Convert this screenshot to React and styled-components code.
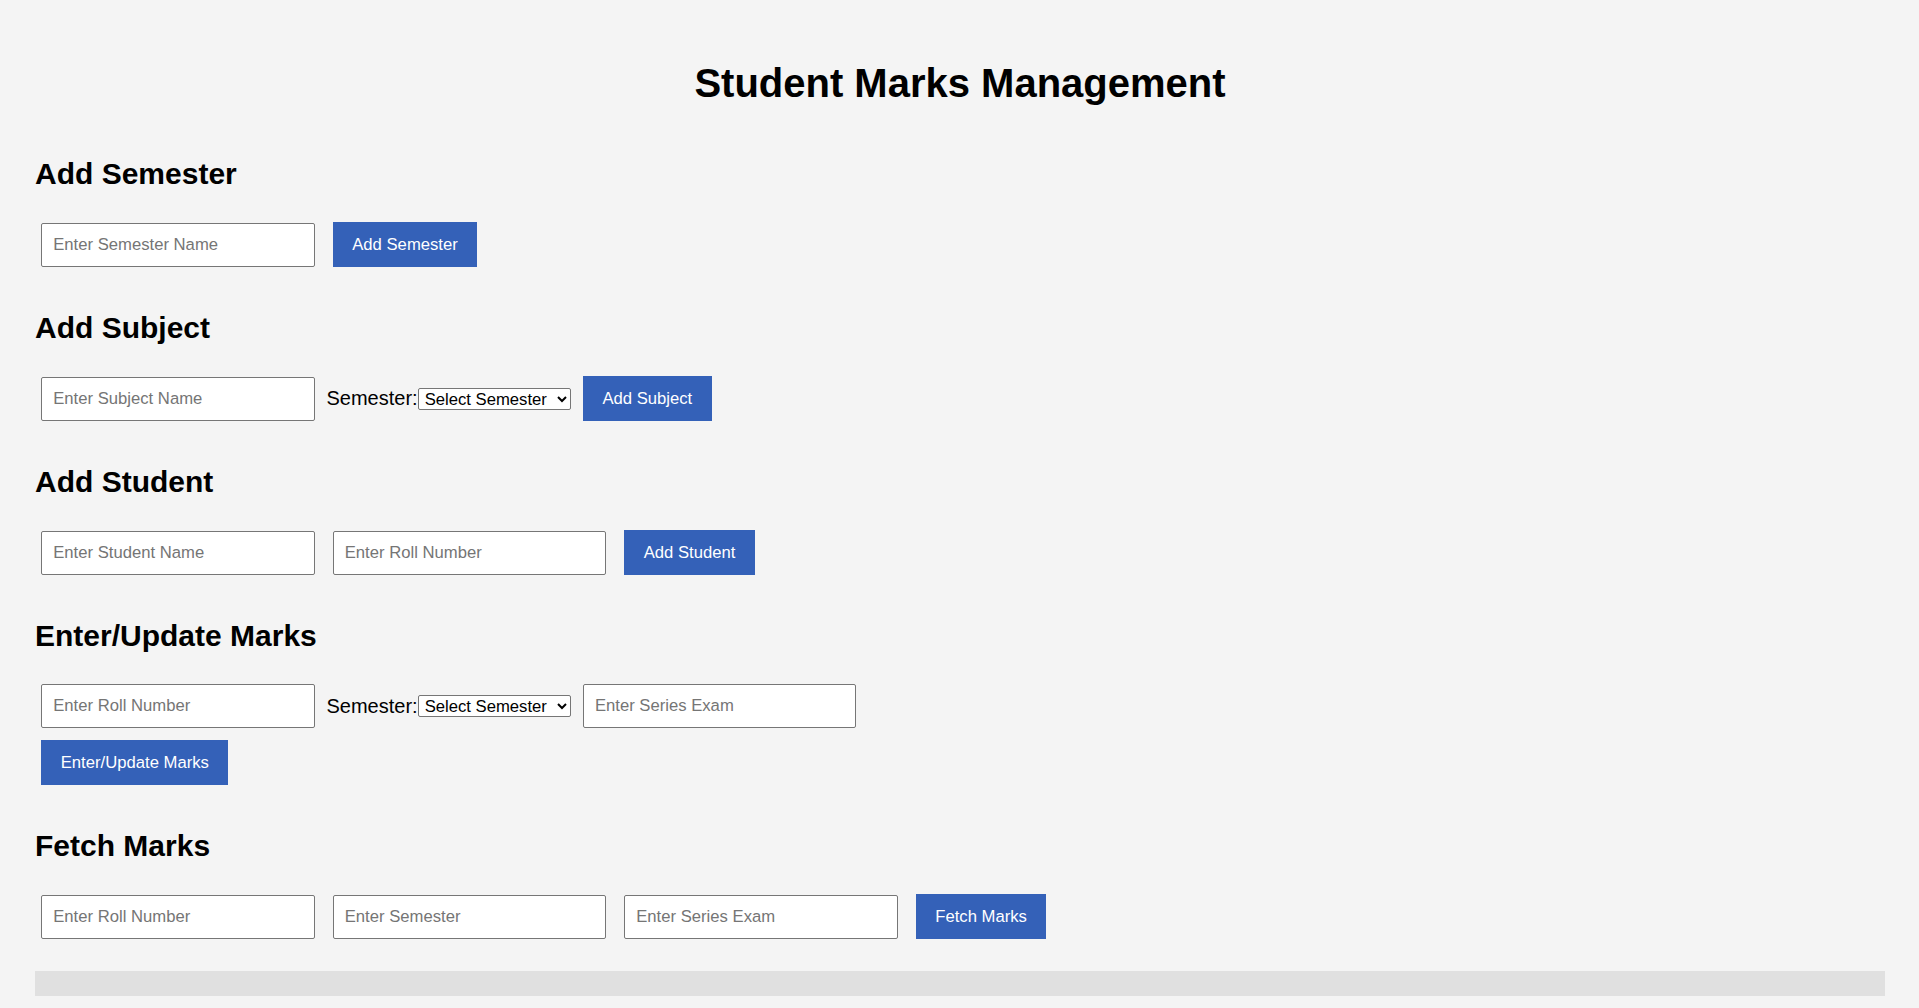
import React, { useState } from 'react';
import styled, { createGlobalStyle } from 'styled-components';

const GlobalStyle = createGlobalStyle`
  html, body {
    margin: 0;
    background-color: #f4f4f4;
  }
  body {
    font-family: "Liberation Sans", Arial, sans-serif;
    color: #000;
  }
`;

const Page = styled.div`
  display: flex;
  flex-direction: column;
  padding: 35px 34px 10px 35px;
`;

const Title = styled.h1`
  margin: 25px 0 26px;
  font-size: 40px;
  line-height: 46px;
  font-weight: 700;
  text-align: center;
`;

const Section = styled.section`
  display: flex;
  flex-direction: column;
  margin-bottom: 12.5px;
`;

const SectionTitle = styled.h2`
  margin: 24.5px 0 25px;
  font-size: 30px;
  line-height: 34.5px;
  font-weight: 700;
`;

const Row = styled.div`
  display: flex;
  flex-wrap: wrap;
  align-items: center;
  column-gap: 5.5px;
`;

const Input = styled.input`
  box-sizing: border-box;
  width: 273.5px;
  height: 43.5px;
  margin: 6.25px;
  padding: 0 11px;
  border: 1px solid #767676;
  border-radius: 2px;
  background: #fff;
  font-family: "Liberation Sans", Arial, sans-serif;
  font-size: 16.67px;
  color: #000;
  outline: none;

  &::placeholder {
    color: #757575;
  }
`;

const Field = styled.div`
  display: inline-flex;
  align-items: center;
`;

const Label = styled.label`
  font-size: 20px;
  line-height: 23px;
`;

const Select = styled.select`
  box-sizing: border-box;
  width: 153.5px;
  height: 22.5px;
  padding: 0 0 0 2px;
  border: 1px solid #767676;
  border-radius: 2px;
  background: #fff;
  color: #000;
  font-family: "Liberation Sans", Arial, sans-serif;
  font-size: 16.67px;
`;

const Button = styled.button`
  margin: 6.25px;
  padding: 0 19.5px;
  height: 45px;
  border: none;
  border-radius: 0;
  background-color: #3461b8;
  color: #fff;
  font-family: "Liberation Sans", Arial, sans-serif;
  font-size: 16.67px;
  cursor: pointer;

  &:hover {
    background-color: #2b55a6;
  }
`;

const Results = styled.div`
  margin-top: 12.5px;
  padding: 12.5px;
  background-color: #e0e0e0;
`;

const SemesterSelect = ({ value, onChange }) => (
  <Field>
    <Label>Semester:</Label>
    <Select value={value} onChange={(e) => onChange(e.target.value)}>
      <option value="">Select Semester</option>
    </Select>
  </Field>
);

const App = () => {
  const [subjectSem, setSubjectSem] = useState('');
  const [marksSem, setMarksSem] = useState('');

  return (
    <>
      <GlobalStyle />
      <Page>
        <Title>Student Marks Management</Title>

        <Section>
          <SectionTitle>Add Semester</SectionTitle>
          <Row>
            <Input type="text" placeholder="Enter Semester Name" />
            <Button>Add Semester</Button>
          </Row>
        </Section>

        <Section>
          <SectionTitle>Add Subject</SectionTitle>
          <Row>
            <Input type="text" placeholder="Enter Subject Name" />
            <SemesterSelect value={subjectSem} onChange={setSubjectSem} />
            <Button>Add Subject</Button>
          </Row>
        </Section>

        <Section>
          <SectionTitle>Add Student</SectionTitle>
          <Row>
            <Input type="text" placeholder="Enter Student Name" />
            <Input type="text" placeholder="Enter Roll Number" />
            <Button>Add Student</Button>
          </Row>
        </Section>

        <Section>
          <SectionTitle>Enter/Update Marks</SectionTitle>
          <Row>
            <Input type="text" placeholder="Enter Roll Number" />
            <SemesterSelect value={marksSem} onChange={setMarksSem} />
            <Input type="text" placeholder="Enter Series Exam" />
          </Row>
          <Row>
            <Button>Enter/Update Marks</Button>
          </Row>
        </Section>

        <Section>
          <SectionTitle>Fetch Marks</SectionTitle>
          <Row>
            <Input type="text" placeholder="Enter Roll Number" />
            <Input type="text" placeholder="Enter Semester" />
            <Input type="text" placeholder="Enter Series Exam" />
            <Button>Fetch Marks</Button>
          </Row>
        </Section>

        <Results />
      </Page>
    </>
  );
};

export default App;
